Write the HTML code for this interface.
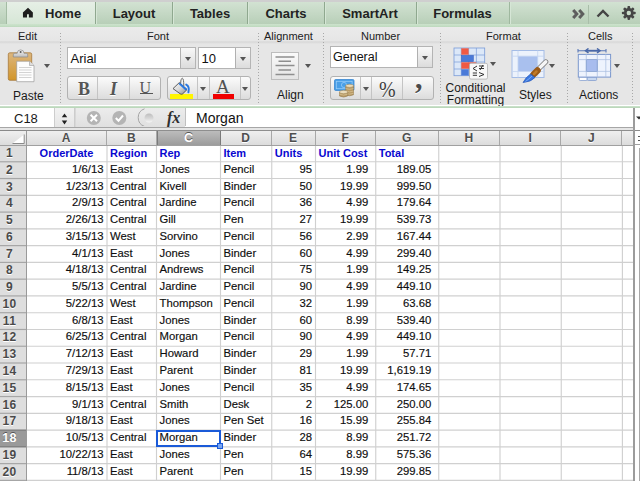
<!DOCTYPE html>
<html><head><meta charset="utf-8">
<style>
html,body{margin:0;padding:0;}
body{width:640px;height:481px;overflow:hidden;position:relative;background:#fff;font-family:"Liberation Sans",sans-serif;color:#1a1a1a;}
.abs{position:absolute;}
/* tab bar */
#topstrip{left:0;top:0;width:640px;height:2px;background:#cfcfcf;}
#tabbar{left:0;top:2px;width:640px;height:22px;background:linear-gradient(#d2e2d2,#b8cfb8);}
.tab{position:absolute;top:2px;height:22px;line-height:24px;font-weight:bold;font-size:13px;color:#222;text-align:center;box-sizing:border-box;}
.tdiv{position:absolute;top:2px;width:1px;height:22px;background:#8fa88f;box-shadow:1px 0 0 #d6e6d6;}
#home{background:linear-gradient(#e6efe6,#d6e6d6);border-left:1px solid #a4bca4;}
#gline1{left:0;top:24px;width:640px;height:3.5px;background:linear-gradient(#cde3cd,#c4dec4 50%,#b2d0b2);}
/* ribbon */
#ribbon{left:0;top:27px;width:640px;height:78px;background:#e6e6e6;}
#ribhead{left:0;top:27px;width:640px;height:17px;background:linear-gradient(#ebebeb 0,#e6e6e6 13.5px,#d8d8d8 15px,#e6e6e6 17px);}
.gl{position:absolute;top:29.5px;font-size:11px;line-height:12px;color:#222;}
.sep{position:absolute;top:33px;width:1px;height:70px;background:repeating-linear-gradient(#a8a8a8 0 1px,transparent 1px 3px);}
.bl{position:absolute;font-size:12px;line-height:13px;color:#1a1a1a;white-space:nowrap;}
.dd{position:absolute;width:0;height:0;border-left:3px solid transparent;border-right:3px solid transparent;border-top:4px solid #555;}
.combo{position:absolute;background:#fff;border:1px solid #b4b4b4;box-sizing:border-box;font-size:13px;color:#111;}
.combo .btn{position:absolute;top:0;bottom:0;right:0;background:linear-gradient(#f8f8f8,#dcdcdc);border-left:1px solid #b0b0b0;}
.bgrp{position:absolute;border:1px solid #b2b2b2;border-radius:3px;background:linear-gradient(#fbfbfb,#dcdcdc);box-sizing:border-box;}
.bdiv{position:absolute;top:0;bottom:0;width:1px;background:#c4c4c4;}
#gline2{left:0;top:106px;width:640px;height:2.3px;background:linear-gradient(#cde3cd,#c4dec4 50%,#b2d0b2);}
/* formula bar */
#fbar{left:0;top:108px;width:640px;height:20px;background:#fff;border-bottom:1px solid #a6a6a6;box-sizing:border-box;}
#gband{left:0;top:128px;width:640px;height:2px;background:#e6e6e6;}
/* grid */
#colhdr{left:0;top:130px;width:640px;height:16px;background:linear-gradient(#efefef,#dcdcdc);border-top:1px solid #8e8e8e;border-bottom:1px solid #a0a0a0;box-sizing:border-box;}
.colh{position:absolute;top:131px;height:14px;line-height:15px;text-align:center;font-weight:bold;font-size:12px;color:#4e4e4e;text-shadow:0 1px 0 #fff;border-right:1px solid #a8a8a8;box-sizing:border-box;}
.colh.sel{background:linear-gradient(#bcbcbc,#9c9c9c);color:#fff;text-shadow:0 -1px 0 #555;font-size:12.5px;border-left:1px solid #7a7a7a;border-right:1px solid #7a7a7a;}
.rowh{position:absolute;left:0;width:26px;line-height:17px;font-weight:bold;font-size:12px;color:#4a4a4a;text-align:center;text-indent:-7px;background:#dedede;box-sizing:border-box;text-shadow:0 1px 0 #fff;letter-spacing:0.3px;}
.rowh.sel{background:#9a9a9a;color:#fff;text-shadow:0 -1px 0 #555;font-size:12.5px;line-height:17.5px;}
#rowhbar{left:26px;top:131px;width:1px;height:350px;background:#9a9a9a;}
.c{position:absolute;height:17px;line-height:15px;font-size:11.3px;color:#0e0e0e;white-space:nowrap;overflow:visible;-webkit-text-stroke:0.15px #0e0e0e;}
.c.h{font-weight:bold;color:#0808d0;-webkit-text-stroke:0;font-size:11px;line-height:16.5px;}
#vsb{left:633px;top:108px;width:7px;height:373px;background:#fff;border-left:2px solid #9c9c9c;box-sizing:border-box;}
</style></head>
<body>
<div id="topstrip" class="abs"></div>
<div id="tabbar" class="abs"></div>
<div id="home" class="tab" style="left:6px;width:89px;"><span style="position:absolute;left:38px;top:0">Home</span>
<svg class="abs" style="left:15px;top:5.2px" width="12" height="11" viewBox="0 0 12 11"><path d="M6 0.7 L0.9 5.4 L1 10.5 L5 10.5 L5 7.3 L6.9 7.3 L6.9 10.5 L10.8 10.5 L10.9 5.4 Z" fill="#1e1e1e"/></svg></div>
<div class="tab" style="left:96px;width:76px;">Layout</div>
<div class="tab" style="left:173px;width:74px;">Tables</div>
<div class="tab" style="left:248px;width:76px;">Charts</div>
<div class="tab" style="left:325px;width:90px;">SmartArt</div>
<div class="tab" style="left:416px;width:93px;">Formulas</div>
<div class="tdiv" style="left:95px"></div><div class="tdiv" style="left:172px"></div><div class="tdiv" style="left:247px"></div><div class="tdiv" style="left:324px"></div><div class="tdiv" style="left:415.5px"></div><div class="tdiv" style="left:509px;background:#9fb89f"></div>
<div class="abs" style="left:588px;top:5px;width:1px;height:19px;background:#a9bea9"></div>
<svg class="abs" style="left:571px;top:8.5px" width="16" height="10" viewBox="0 0 16 10"><path d="M2.2 1 L5.8 5 L2.2 9 M8.2 1 L11.8 5 L8.2 9" stroke="#5e5e5e" stroke-width="3" fill="none"/></svg>
<svg class="abs" style="left:596px;top:9px" width="14" height="9" viewBox="0 0 14 9"><path d="M1.5 7.5 L7 2 L12.5 7.5" stroke="#444" stroke-width="2.4" fill="none"/></svg>
<svg class="abs" style="left:621px;top:5px" width="16" height="16" viewBox="0 0 16 16"><g fill="#454545" transform="translate(7.8 8)"><circle r="4.9"/><rect x="-1.35" y="-6.9" width="2.7" height="13.8" rx="0.8"/><rect x="-1.35" y="-6.9" width="2.7" height="13.8" rx="0.8" transform="rotate(45)"/><rect x="-1.35" y="-6.9" width="2.7" height="13.8" rx="0.8" transform="rotate(90)"/><rect x="-1.35" y="-6.9" width="2.7" height="13.8" rx="0.8" transform="rotate(135)"/><circle r="2.2" fill="#c9dcc9"/></g></svg>
<div id="gline1" class="abs"></div>
<div id="ribbon" class="abs"></div>
<div id="ribhead" class="abs"></div>
<!-- group labels -->
<div class="gl" style="left:18px">Edit</div>
<div class="gl" style="left:147px">Font</div>
<div class="gl" style="left:264px">Alignment</div>
<div class="gl" style="left:361px">Number</div>
<div class="gl" style="left:486px">Format</div>
<div class="gl" style="left:588px">Cells</div>
<div class="sep" style="left:60px"></div>
<div class="sep" style="left:258px"></div>
<div class="sep" style="left:323px"></div>
<div class="sep" style="left:440px"></div>
<div class="sep" style="left:567px"></div>
<div class="sep" style="left:632px"></div>
<!-- Edit: paste -->
<svg class="abs" style="left:7px;top:48px" width="29" height="35" viewBox="0 0 29 35">
<defs><linearGradient id="brd" x1="0" y1="0" x2="0" y2="1"><stop offset="0" stop-color="#dcb67e"/><stop offset="1" stop-color="#d2962a"/></linearGradient>
<linearGradient id="clp" x1="0" y1="0" x2="0" y2="1"><stop offset="0" stop-color="#f4f4f4"/><stop offset="1" stop-color="#bdbdbd"/></linearGradient></defs>
<rect x="1.3" y="4.8" width="23.4" height="27.5" rx="1.5" fill="url(#brd)" stroke="#a77a3c" stroke-width="0.8"/>
<path d="M6.3 9 L6.3 6.8 Q6.3 5.3 7.8 5.3 L10.2 5.3 A3.4 3.4 0 0 1 17 5.3 L19.2 5.3 Q20.7 5.3 20.7 6.8 L20.7 9 Z" fill="url(#clp)" stroke="#8a8a8a" stroke-width="0.7"/>
<circle cx="13.6" cy="3.9" r="1" fill="#5a5a5a"/>
<path d="M9.7 13.2 L22.5 13.2 L27 17.5 L27 33.7 L9.7 33.7 Z" fill="#fdfdfd" stroke="#9a9a9a" stroke-width="0.7"/>
<path d="M22.5 13.2 L22.5 17.5 L27 17.5" fill="#ddd" stroke="#9a9a9a" stroke-width="0.6"/>
<path d="M12 19.5 H24.5 M12 22 H24.5 M12 24.5 H24.5 M12 27 H24.5 M12 29.5 H24.5" stroke="#c8c8c8" stroke-width="0.8"/>
</svg>
<div class="dd" style="left:44px;top:64px"></div>
<div class="bl" style="left:13px;top:89.5px">Paste</div>
<!-- Font group -->
<div class="combo" style="left:67px;top:47px;width:129px;height:22px"><span style="position:absolute;left:2.5px;top:2.5px;line-height:15px">Arial</span><div class="btn" style="width:14px"></div></div>
<div class="dd" style="left:185px;top:57px"></div>
<div class="combo" style="left:198px;top:47px;width:53px;height:22px"><span style="position:absolute;left:2.5px;top:2.5px;line-height:15px">10</span><div class="btn" style="width:14px"></div></div>
<div class="dd" style="left:240px;top:57px"></div>
<div class="bgrp" style="left:67px;top:76px;width:94px;height:24px">
<div class="bdiv" style="left:29px"></div><div class="bdiv" style="left:60.5px"></div>
<span class="abs" style="left:10px;top:2px;font-family:'Liberation Serif',serif;font-weight:bold;font-size:18px;color:#555;text-shadow:0 1px 0 #fff">B</span>
<span class="abs" style="left:42px;top:2px;font-family:'Liberation Serif',serif;font-style:italic;font-weight:bold;font-size:18px;color:#555;text-shadow:0 1px 0 #fff">I</span>
<span class="abs" style="left:71.5px;top:1.5px;font-family:'Liberation Serif',serif;font-size:16px;line-height:18px;color:#555;text-shadow:0 1px 0 #fff">U</span><div class="abs" style="left:72px;top:16px;width:12.5px;height:1.3px;background:#555"></div>
</div>
<div class="bgrp" style="left:167px;top:76px;width:84px;height:24px">
<div class="bdiv" style="left:28.5px"></div><div class="bdiv" style="left:40.5px"></div><div class="bdiv" style="left:71.5px"></div>
<div class="abs" style="left:2px;top:17px;width:22.5px;height:5px;background:#fff500"></div>
<div class="abs" style="left:44.5px;top:17px;width:21.5px;height:5px;background:#f00000"></div>
<span class="abs" style="left:48px;top:-1px;font-family:'Liberation Serif',serif;font-size:19px;color:#505050;">A</span>
<svg class="abs" style="left:0px;top:-1px" width="24" height="20" viewBox="0 0 24 20">
<defs><linearGradient id="silv" x1="0" y1="0" x2="1" y2="1"><stop offset="0" stop-color="#fafafa"/><stop offset="0.5" stop-color="#d8d8d8"/><stop offset="1" stop-color="#8a8a8a"/></linearGradient></defs>
<path d="M5 12.6 L11.3 6.6 L19 13.6 L14.6 17.9 Q13.5 18.6 12.3 17.9 Z" fill="url(#silv)" stroke="#3a3a3a" stroke-width="0.8"/>
<path d="M11.3 7.2 L18.4 13.8" stroke="#2a78e0" stroke-width="2.2"/>
<path d="M12.6 7.6 Q12.6 2 14.3 2.2 Q15.8 2.5 15.8 10" stroke="#6a6a6a" stroke-width="1" fill="none"/>
<path d="M18.2 8.6 Q21.8 10.2 20.4 16.2" stroke="#2a78e0" stroke-width="2" fill="none" stroke-linecap="round"/>
</svg>
</div>
<div class="dd" style="left:200px;top:87px"></div>
<div class="dd" style="left:242px;top:87px"></div>
<!-- Alignment -->
<div class="abs" style="left:271px;top:52px;width:28px;height:28px;box-sizing:border-box;border:1px solid #bdbdbd;background:linear-gradient(#fafafa,#e4e4e4);"></div>
<svg class="abs" style="left:271px;top:52px" width="28" height="28"><path d="M4.5 5 H23.5 M7.5 9.3 H20 M4.5 13.5 H23.5 M7.5 18 H20 M4.5 22.5 H23.5" stroke="#8e8e8e" stroke-width="1.5"/></svg>
<div class="dd" style="left:305px;top:64px"></div>
<div class="bl" style="left:277px;top:89px">Align</div>
<!-- Number -->
<div class="combo" style="left:330px;top:46px;width:103px;height:22px"><span style="position:absolute;left:2px;top:3px;line-height:15px;font-size:12.5px">General</span><div class="btn" style="width:14px"></div></div>
<div class="dd" style="left:422px;top:56px"></div>
<div class="bgrp" style="left:330px;top:76px;width:104px;height:24px">
<div class="bdiv" style="left:29.2px"></div><div class="bdiv" style="left:40.2px"></div><div class="bdiv" style="left:71.2px"></div>
<span class="abs" style="left:48px;top:0.5px;font-family:'Liberation Serif',serif;font-size:20px;line-height:20px;color:#3e3e3e;text-shadow:0 1px 0 #fff;transform:scaleY(1.13);transform-origin:0 0">%</span>
<span class="abs" style="left:84px;top:-14px;font-family:'Liberation Serif',serif;font-weight:bold;font-size:30px;line-height:30px;color:#4a4a4a;text-shadow:0 1px 0 #fff">,</span>
<svg class="abs" style="left:3px;top:2px" width="22" height="20" viewBox="0 0 22 20">
<rect x="0.5" y="0.5" width="19.5" height="11" rx="1.2" fill="#4a9fe6" stroke="#3a86d0" stroke-width="0.8"/>
<rect x="2.3" y="2.3" width="15.8" height="7.4" fill="none" stroke="#9cd0fa" stroke-width="0.7"/>
<circle cx="10" cy="6" r="2.6" fill="none" stroke="#9cd0fa" stroke-width="0.7"/>
<path d="M11.7 6.8 V15.8 Q15.6 17.8 19.5 15.8 V6.8 Z" fill="#b89a66" stroke="#8c7040" stroke-width="0.5"/>
<path d="M11.7 9.5 Q15.6 11.3 19.5 9.5 M11.7 12 Q15.6 13.8 19.5 12 M11.7 14.3 Q15.6 16 19.5 14.3" stroke="#e0cca0" stroke-width="0.6" fill="none"/>
<ellipse cx="15.6" cy="6.8" rx="3.9" ry="1.6" fill="#eadcbc" stroke="#9c8050" stroke-width="0.5"/>
<path d="M5.5 13 V17 Q9.6 19.2 13.7 17 V13 Z" fill="#b89a66" stroke="#8c7040" stroke-width="0.5"/>
<path d="M5.5 15.2 Q9.6 17 13.7 15.2" stroke="#e0cca0" stroke-width="0.6" fill="none"/>
<ellipse cx="9.6" cy="13" rx="4.1" ry="1.7" fill="#eadcbc" stroke="#9c8050" stroke-width="0.5"/>
</svg>
</div>
<div class="dd" style="left:363px;top:87px"></div>
<!-- Format -->
<svg class="abs" style="left:453px;top:47px" width="36" height="34" viewBox="0 0 36 34">
<rect x="1" y="1" width="30.7" height="27.7" fill="#dce8f8" stroke="#7a9cd8" stroke-width="0.8"/>
<path d="M8.3 1 V28.7 M15.6 1 V28.7 M23.4 1 V28.7 M1 8 H31.7 M1 15 H31.7 M1 22 H31.7" stroke="#7a9cd8" stroke-width="0.7"/>
<rect x="8.3" y="1.3" width="7.3" height="6.4" fill="#f05a44"/>
<rect x="8.3" y="8.3" width="12.2" height="6.4" fill="#4a7ad8" stroke="#3a62c0" stroke-width="0.5"/>
<rect x="8.3" y="15.3" width="15" height="6.4" fill="#f05a44"/>
<rect x="8.3" y="22.3" width="7.3" height="6.2" fill="#4a7ad8"/>
<rect x="16.5" y="16.3" width="18" height="15.8" rx="1.5" fill="#f8f8f8" stroke="#b0b0b0" stroke-width="0.8"/>
<path d="M24 19 L20 21.5 L24 24 M19.8 26 H24 M19.8 28.3 H24 M26 19 H31 M26 21.5 H31 M30 18 L27 23 M26 25.5 L31 27.5 L26 29.5" stroke="#333" stroke-width="1" fill="none"/>
</svg>
<div class="dd" style="left:490px;top:62px"></div>
<div class="bl" style="left:445px;top:82px;line-height:12px;text-align:center;width:61px">Conditional<br>Formatting</div>
<svg class="abs" style="left:511px;top:49px" width="38" height="35" viewBox="0 0 38 35">
<rect x="1" y="1.5" width="32" height="27" fill="#ecf2fc" stroke="#a4bce6" stroke-width="1"/>
<rect x="7" y="7.2" width="19.7" height="15.3" fill="#a9c0ee"/>
<path d="M7 1.5 V28.5 M26.7 1.5 V28.5 M1 7.2 H33 M1 22.5 H33" stroke="#c4d4f0" stroke-width="0.8"/>
<path d="M34.8 12.8 L27.5 20" stroke="#7a7a7a" stroke-width="5" stroke-linecap="round"/>
<path d="M34.8 12.8 L27.5 20" stroke="#f6f6f6" stroke-width="3.4" stroke-linecap="round"/>
<path d="M26.5 21.5 L22.5 25.5" stroke="#9a5a18" stroke-width="6.5" stroke-linecap="round"/>
<path d="M25.5 22.5 L23 25" stroke="#c07a28" stroke-width="2.5" stroke-linecap="round"/>
<path d="M19.5 25 Q22 26.5 24 28.5 Q20 33 12 33.5 Q15 28 19.5 25 Z" fill="#3a78e0" stroke="#2858b8" stroke-width="0.7"/>
<path d="M21 27 Q18 30 14.5 32.5" stroke="#8cb8f8" stroke-width="0.8" fill="none"/>
</svg>
<div class="dd" style="left:549px;top:64px"></div>
<div class="bl" style="left:519px;top:89px">Styles</div>
<!-- Cells -->
<svg class="abs" style="left:577px;top:48px" width="36" height="34" viewBox="0 0 36 34">
<path d="M1 1 V4.5 M29 1 V4.5 M1 2.7 H29" stroke="#5a78b8" stroke-width="1.1" fill="none"/>
<path d="M9.5 2.7 H22" stroke="#4a68a8" stroke-width="1.8"/>
<path d="M11.5 0.5 L8.5 2.7 L11.5 4.9 M20 0.5 L23 2.7 L20 4.9" stroke="#4a68a8" stroke-width="1.5" fill="none"/>
<rect x="2.2" y="29" width="8" height="3.5" rx="1" fill="#fff" stroke="#7a96cc" stroke-width="0.7"/>
<rect x="10.2" y="29" width="9.4" height="3.5" rx="1" fill="#c8d8f0" stroke="#7a96cc" stroke-width="0.7"/>
<rect x="1.3" y="6.4" width="32.3" height="22.7" fill="#eef3fd" stroke="#7a96cc" stroke-width="1"/>
<rect x="9.3" y="11.6" width="11" height="11.8" fill="#a8bcee" stroke="#6080c0" stroke-width="0.8"/>
<path d="M9.3 6 V29.3 M20.3 6 V29.3 M28.8 6 V29.3 M1 11.6 H34 M1 23.4 H34" stroke="#a8bce0" stroke-width="0.7"/>
</svg>
<div class="dd" style="left:614px;top:64px"></div>
<div class="bl" style="left:579px;top:89px">Actions</div>
<div id="gline2" class="abs"></div>
<!-- formula bar -->
<div id="fbar" class="abs"></div>
<div class="abs" style="left:0;top:108px;width:54px;height:18px;background:#fff;font-size:13px;line-height:18px;"><span style="position:absolute;left:14px;top:2px">C18</span></div>
<div class="abs" style="left:54px;top:108px;width:21px;height:19px;background:linear-gradient(#f2f2f2,#e6e6e6);border-left:1px solid #cdcdcd;border-right:1px solid #cdcdcd;box-sizing:border-box"></div>
<svg class="abs" style="left:61px;top:113px" width="7" height="12"><path d="M3.5 0.6 L6.2 4.2 H0.8 Z M3.5 11.4 L6.2 7.6 H0.8 Z" fill="#222"/></svg>
<div class="abs" style="left:75px;top:108px;width:110px;height:19px;background:linear-gradient(#ececec,#e0e0e0);border-left:1px solid #d8d8d8;box-sizing:border-box"></div>
<svg class="abs" style="left:77px;top:108px" width="108" height="18">
<circle cx="16.8" cy="10" r="7" fill="#b4b4b4"/><path d="M13.6 6.8 L20 13.2 M20 6.8 L13.6 13.2" stroke="#fff" stroke-width="2"/>
<circle cx="42.3" cy="10" r="7" fill="#b4b4b4"/><path d="M38.8 10 L41.5 12.8 L46 7.5" stroke="#fff" stroke-width="2" fill="none"/>
<defs><linearGradient id="sph" x1="0" y1="0" x2="0" y2="1"><stop offset="0" stop-color="#bdbdbd"/><stop offset="0.55" stop-color="#d8d8d8"/><stop offset="1" stop-color="#f6f6f6"/></linearGradient></defs>
<path d="M67.5 0.8 A9.3 9.3 0 0 0 67.5 18.4" stroke="#a4a4a4" stroke-width="1" fill="none"/>
<circle cx="72" cy="10" r="4.5" fill="url(#sph)"/>
</svg>
<span class="abs" style="left:167px;top:108px;font-family:'Liberation Serif',serif;font-style:italic;font-weight:bold;font-size:16px;line-height:20px;color:#2e2e2e">fx</span>
<div class="abs" style="left:185px;top:108px;width:448px;height:18px;background:#fff;border-left:1px solid #c0c0c0"></div>
<span class="abs" style="left:196px;top:109px;font-size:14px;line-height:19px;color:#111">Morgan</span>
<div id="gband" class="abs"></div>
<!-- grid -->
<svg class="abs" style="left:0;top:0" width="640" height="481"><line x1="26" y1="145.00" x2="633" y2="145.00" stroke="#d0d0d0" stroke-width="1.15"/><line x1="26" y1="161.77" x2="633" y2="161.77" stroke="#d0d0d0" stroke-width="1.15"/><line x1="26" y1="178.54" x2="633" y2="178.54" stroke="#d0d0d0" stroke-width="1.15"/><line x1="26" y1="195.31" x2="633" y2="195.31" stroke="#d0d0d0" stroke-width="1.15"/><line x1="26" y1="212.08" x2="633" y2="212.08" stroke="#d0d0d0" stroke-width="1.15"/><line x1="26" y1="228.85" x2="633" y2="228.85" stroke="#d0d0d0" stroke-width="1.15"/><line x1="26" y1="245.62" x2="633" y2="245.62" stroke="#d0d0d0" stroke-width="1.15"/><line x1="26" y1="262.39" x2="633" y2="262.39" stroke="#d0d0d0" stroke-width="1.15"/><line x1="26" y1="279.16" x2="633" y2="279.16" stroke="#d0d0d0" stroke-width="1.15"/><line x1="26" y1="295.93" x2="633" y2="295.93" stroke="#d0d0d0" stroke-width="1.15"/><line x1="26" y1="312.70" x2="633" y2="312.70" stroke="#d0d0d0" stroke-width="1.15"/><line x1="26" y1="329.47" x2="633" y2="329.47" stroke="#d0d0d0" stroke-width="1.15"/><line x1="26" y1="346.24" x2="633" y2="346.24" stroke="#d0d0d0" stroke-width="1.15"/><line x1="26" y1="363.01" x2="633" y2="363.01" stroke="#d0d0d0" stroke-width="1.15"/><line x1="26" y1="379.78" x2="633" y2="379.78" stroke="#d0d0d0" stroke-width="1.15"/><line x1="26" y1="396.55" x2="633" y2="396.55" stroke="#d0d0d0" stroke-width="1.15"/><line x1="26" y1="413.32" x2="633" y2="413.32" stroke="#d0d0d0" stroke-width="1.15"/><line x1="26" y1="430.09" x2="633" y2="430.09" stroke="#d0d0d0" stroke-width="1.15"/><line x1="26" y1="446.86" x2="633" y2="446.86" stroke="#d0d0d0" stroke-width="1.15"/><line x1="26" y1="463.63" x2="633" y2="463.63" stroke="#d0d0d0" stroke-width="1.15"/><line x1="26" y1="480.40" x2="633" y2="480.40" stroke="#d0d0d0" stroke-width="1.15"/><line x1="107" y1="145" x2="107" y2="481" stroke="#d0d0d0" stroke-width="1.15"/><line x1="156.5" y1="145" x2="156.5" y2="481" stroke="#d0d0d0" stroke-width="1.15"/><line x1="220.5" y1="145" x2="220.5" y2="481" stroke="#d0d0d0" stroke-width="1.15"/><line x1="271.75" y1="145" x2="271.75" y2="481" stroke="#d0d0d0" stroke-width="1.15"/><line x1="315.5" y1="145" x2="315.5" y2="481" stroke="#d0d0d0" stroke-width="1.15"/><line x1="375.75" y1="145" x2="375.75" y2="481" stroke="#d0d0d0" stroke-width="1.15"/><line x1="438.75" y1="145" x2="438.75" y2="481" stroke="#d0d0d0" stroke-width="1.15"/><line x1="500" y1="145" x2="500" y2="481" stroke="#d0d0d0" stroke-width="1.15"/><line x1="561.25" y1="145" x2="561.25" y2="481" stroke="#d0d0d0" stroke-width="1.15"/><line x1="622.4" y1="145" x2="622.4" y2="481" stroke="#d0d0d0" stroke-width="1.15"/></svg><div class="c h" style="left:29.00px;width:75.00px;top:145.00px;text-align:center">OrderDate</div><div class="c h" style="left:110.00px;width:43.50px;top:145.00px;text-align:left">Region</div><div class="c h" style="left:159.50px;width:58.00px;top:145.00px;text-align:left">Rep</div><div class="c h" style="left:223.50px;width:45.25px;top:145.00px;text-align:left">Item</div><div class="c h" style="left:274.75px;width:37.75px;top:145.00px;text-align:left">Units</div><div class="c h" style="left:318.50px;width:54.25px;top:145.00px;text-align:left">Unit Cost</div><div class="c h" style="left:378.75px;width:57.00px;top:145.00px;text-align:left">Total</div><div class="c" style="left:29.00px;width:74.50px;top:161.77px;text-align:right">1/6/13</div><div class="c" style="left:110.00px;width:43.00px;top:161.77px;text-align:left">East</div><div class="c" style="left:159.50px;width:57.50px;top:161.77px;text-align:left">Jones</div><div class="c" style="left:223.50px;width:44.75px;top:161.77px;text-align:left">Pencil</div><div class="c" style="left:274.75px;width:37.25px;top:161.77px;text-align:right">95</div><div class="c" style="left:318.50px;width:49.75px;top:161.77px;text-align:right">1.99</div><div class="c" style="left:378.75px;width:52.50px;top:161.77px;text-align:right">189.05</div><div class="c" style="left:29.00px;width:74.50px;top:178.54px;text-align:right">1/23/13</div><div class="c" style="left:110.00px;width:43.00px;top:178.54px;text-align:left">Central</div><div class="c" style="left:159.50px;width:57.50px;top:178.54px;text-align:left">Kivell</div><div class="c" style="left:223.50px;width:44.75px;top:178.54px;text-align:left">Binder</div><div class="c" style="left:274.75px;width:37.25px;top:178.54px;text-align:right">50</div><div class="c" style="left:318.50px;width:49.75px;top:178.54px;text-align:right">19.99</div><div class="c" style="left:378.75px;width:52.50px;top:178.54px;text-align:right">999.50</div><div class="c" style="left:29.00px;width:74.50px;top:195.31px;text-align:right">2/9/13</div><div class="c" style="left:110.00px;width:43.00px;top:195.31px;text-align:left">Central</div><div class="c" style="left:159.50px;width:57.50px;top:195.31px;text-align:left">Jardine</div><div class="c" style="left:223.50px;width:44.75px;top:195.31px;text-align:left">Pencil</div><div class="c" style="left:274.75px;width:37.25px;top:195.31px;text-align:right">36</div><div class="c" style="left:318.50px;width:49.75px;top:195.31px;text-align:right">4.99</div><div class="c" style="left:378.75px;width:52.50px;top:195.31px;text-align:right">179.64</div><div class="c" style="left:29.00px;width:74.50px;top:212.08px;text-align:right">2/26/13</div><div class="c" style="left:110.00px;width:43.00px;top:212.08px;text-align:left">Central</div><div class="c" style="left:159.50px;width:57.50px;top:212.08px;text-align:left">Gill</div><div class="c" style="left:223.50px;width:44.75px;top:212.08px;text-align:left">Pen</div><div class="c" style="left:274.75px;width:37.25px;top:212.08px;text-align:right">27</div><div class="c" style="left:318.50px;width:49.75px;top:212.08px;text-align:right">19.99</div><div class="c" style="left:378.75px;width:52.50px;top:212.08px;text-align:right">539.73</div><div class="c" style="left:29.00px;width:74.50px;top:228.85px;text-align:right">3/15/13</div><div class="c" style="left:110.00px;width:43.00px;top:228.85px;text-align:left">West</div><div class="c" style="left:159.50px;width:57.50px;top:228.85px;text-align:left">Sorvino</div><div class="c" style="left:223.50px;width:44.75px;top:228.85px;text-align:left">Pencil</div><div class="c" style="left:274.75px;width:37.25px;top:228.85px;text-align:right">56</div><div class="c" style="left:318.50px;width:49.75px;top:228.85px;text-align:right">2.99</div><div class="c" style="left:378.75px;width:52.50px;top:228.85px;text-align:right">167.44</div><div class="c" style="left:29.00px;width:74.50px;top:245.62px;text-align:right">4/1/13</div><div class="c" style="left:110.00px;width:43.00px;top:245.62px;text-align:left">East</div><div class="c" style="left:159.50px;width:57.50px;top:245.62px;text-align:left">Jones</div><div class="c" style="left:223.50px;width:44.75px;top:245.62px;text-align:left">Binder</div><div class="c" style="left:274.75px;width:37.25px;top:245.62px;text-align:right">60</div><div class="c" style="left:318.50px;width:49.75px;top:245.62px;text-align:right">4.99</div><div class="c" style="left:378.75px;width:52.50px;top:245.62px;text-align:right">299.40</div><div class="c" style="left:29.00px;width:74.50px;top:262.39px;text-align:right">4/18/13</div><div class="c" style="left:110.00px;width:43.00px;top:262.39px;text-align:left">Central</div><div class="c" style="left:159.50px;width:57.50px;top:262.39px;text-align:left">Andrews</div><div class="c" style="left:223.50px;width:44.75px;top:262.39px;text-align:left">Pencil</div><div class="c" style="left:274.75px;width:37.25px;top:262.39px;text-align:right">75</div><div class="c" style="left:318.50px;width:49.75px;top:262.39px;text-align:right">1.99</div><div class="c" style="left:378.75px;width:52.50px;top:262.39px;text-align:right">149.25</div><div class="c" style="left:29.00px;width:74.50px;top:279.16px;text-align:right">5/5/13</div><div class="c" style="left:110.00px;width:43.00px;top:279.16px;text-align:left">Central</div><div class="c" style="left:159.50px;width:57.50px;top:279.16px;text-align:left">Jardine</div><div class="c" style="left:223.50px;width:44.75px;top:279.16px;text-align:left">Pencil</div><div class="c" style="left:274.75px;width:37.25px;top:279.16px;text-align:right">90</div><div class="c" style="left:318.50px;width:49.75px;top:279.16px;text-align:right">4.99</div><div class="c" style="left:378.75px;width:52.50px;top:279.16px;text-align:right">449.10</div><div class="c" style="left:29.00px;width:74.50px;top:295.93px;text-align:right">5/22/13</div><div class="c" style="left:110.00px;width:43.00px;top:295.93px;text-align:left">West</div><div class="c" style="left:159.50px;width:57.50px;top:295.93px;text-align:left">Thompson</div><div class="c" style="left:223.50px;width:44.75px;top:295.93px;text-align:left">Pencil</div><div class="c" style="left:274.75px;width:37.25px;top:295.93px;text-align:right">32</div><div class="c" style="left:318.50px;width:49.75px;top:295.93px;text-align:right">1.99</div><div class="c" style="left:378.75px;width:52.50px;top:295.93px;text-align:right">63.68</div><div class="c" style="left:29.00px;width:74.50px;top:312.70px;text-align:right">6/8/13</div><div class="c" style="left:110.00px;width:43.00px;top:312.70px;text-align:left">East</div><div class="c" style="left:159.50px;width:57.50px;top:312.70px;text-align:left">Jones</div><div class="c" style="left:223.50px;width:44.75px;top:312.70px;text-align:left">Binder</div><div class="c" style="left:274.75px;width:37.25px;top:312.70px;text-align:right">60</div><div class="c" style="left:318.50px;width:49.75px;top:312.70px;text-align:right">8.99</div><div class="c" style="left:378.75px;width:52.50px;top:312.70px;text-align:right">539.40</div><div class="c" style="left:29.00px;width:74.50px;top:329.47px;text-align:right">6/25/13</div><div class="c" style="left:110.00px;width:43.00px;top:329.47px;text-align:left">Central</div><div class="c" style="left:159.50px;width:57.50px;top:329.47px;text-align:left">Morgan</div><div class="c" style="left:223.50px;width:44.75px;top:329.47px;text-align:left">Pencil</div><div class="c" style="left:274.75px;width:37.25px;top:329.47px;text-align:right">90</div><div class="c" style="left:318.50px;width:49.75px;top:329.47px;text-align:right">4.99</div><div class="c" style="left:378.75px;width:52.50px;top:329.47px;text-align:right">449.10</div><div class="c" style="left:29.00px;width:74.50px;top:346.24px;text-align:right">7/12/13</div><div class="c" style="left:110.00px;width:43.00px;top:346.24px;text-align:left">East</div><div class="c" style="left:159.50px;width:57.50px;top:346.24px;text-align:left">Howard</div><div class="c" style="left:223.50px;width:44.75px;top:346.24px;text-align:left">Binder</div><div class="c" style="left:274.75px;width:37.25px;top:346.24px;text-align:right">29</div><div class="c" style="left:318.50px;width:49.75px;top:346.24px;text-align:right">1.99</div><div class="c" style="left:378.75px;width:52.50px;top:346.24px;text-align:right">57.71</div><div class="c" style="left:29.00px;width:74.50px;top:363.01px;text-align:right">7/29/13</div><div class="c" style="left:110.00px;width:43.00px;top:363.01px;text-align:left">East</div><div class="c" style="left:159.50px;width:57.50px;top:363.01px;text-align:left">Parent</div><div class="c" style="left:223.50px;width:44.75px;top:363.01px;text-align:left">Binder</div><div class="c" style="left:274.75px;width:37.25px;top:363.01px;text-align:right">81</div><div class="c" style="left:318.50px;width:49.75px;top:363.01px;text-align:right">19.99</div><div class="c" style="left:378.75px;width:52.50px;top:363.01px;text-align:right">1,619.19</div><div class="c" style="left:29.00px;width:74.50px;top:379.78px;text-align:right">8/15/13</div><div class="c" style="left:110.00px;width:43.00px;top:379.78px;text-align:left">East</div><div class="c" style="left:159.50px;width:57.50px;top:379.78px;text-align:left">Jones</div><div class="c" style="left:223.50px;width:44.75px;top:379.78px;text-align:left">Pencil</div><div class="c" style="left:274.75px;width:37.25px;top:379.78px;text-align:right">35</div><div class="c" style="left:318.50px;width:49.75px;top:379.78px;text-align:right">4.99</div><div class="c" style="left:378.75px;width:52.50px;top:379.78px;text-align:right">174.65</div><div class="c" style="left:29.00px;width:74.50px;top:396.55px;text-align:right">9/1/13</div><div class="c" style="left:110.00px;width:43.00px;top:396.55px;text-align:left">Central</div><div class="c" style="left:159.50px;width:57.50px;top:396.55px;text-align:left">Smith</div><div class="c" style="left:223.50px;width:44.75px;top:396.55px;text-align:left">Desk</div><div class="c" style="left:274.75px;width:37.25px;top:396.55px;text-align:right">2</div><div class="c" style="left:318.50px;width:49.75px;top:396.55px;text-align:right">125.00</div><div class="c" style="left:378.75px;width:52.50px;top:396.55px;text-align:right">250.00</div><div class="c" style="left:29.00px;width:74.50px;top:413.32px;text-align:right">9/18/13</div><div class="c" style="left:110.00px;width:43.00px;top:413.32px;text-align:left">East</div><div class="c" style="left:159.50px;width:57.50px;top:413.32px;text-align:left">Jones</div><div class="c" style="left:223.50px;width:44.75px;top:413.32px;text-align:left">Pen Set</div><div class="c" style="left:274.75px;width:37.25px;top:413.32px;text-align:right">16</div><div class="c" style="left:318.50px;width:49.75px;top:413.32px;text-align:right">15.99</div><div class="c" style="left:378.75px;width:52.50px;top:413.32px;text-align:right">255.84</div><div class="c" style="left:29.00px;width:74.50px;top:430.09px;text-align:right">10/5/13</div><div class="c" style="left:110.00px;width:43.00px;top:430.09px;text-align:left">Central</div><div class="c" style="left:159.50px;width:57.50px;top:430.09px;text-align:left">Morgan</div><div class="c" style="left:223.50px;width:44.75px;top:430.09px;text-align:left">Binder</div><div class="c" style="left:274.75px;width:37.25px;top:430.09px;text-align:right">28</div><div class="c" style="left:318.50px;width:49.75px;top:430.09px;text-align:right">8.99</div><div class="c" style="left:378.75px;width:52.50px;top:430.09px;text-align:right">251.72</div><div class="c" style="left:29.00px;width:74.50px;top:446.86px;text-align:right">10/22/13</div><div class="c" style="left:110.00px;width:43.00px;top:446.86px;text-align:left">East</div><div class="c" style="left:159.50px;width:57.50px;top:446.86px;text-align:left">Jones</div><div class="c" style="left:223.50px;width:44.75px;top:446.86px;text-align:left">Pen</div><div class="c" style="left:274.75px;width:37.25px;top:446.86px;text-align:right">64</div><div class="c" style="left:318.50px;width:49.75px;top:446.86px;text-align:right">8.99</div><div class="c" style="left:378.75px;width:52.50px;top:446.86px;text-align:right">575.36</div><div class="c" style="left:29.00px;width:74.50px;top:463.63px;text-align:right">11/8/13</div><div class="c" style="left:110.00px;width:43.00px;top:463.63px;text-align:left">East</div><div class="c" style="left:159.50px;width:57.50px;top:463.63px;text-align:left">Parent</div><div class="c" style="left:223.50px;width:44.75px;top:463.63px;text-align:left">Pen</div><div class="c" style="left:274.75px;width:37.25px;top:463.63px;text-align:right">15</div><div class="c" style="left:318.50px;width:49.75px;top:463.63px;text-align:right">19.99</div><div class="c" style="left:378.75px;width:52.50px;top:463.63px;text-align:right">299.85</div>
<div id="colhdr" class="abs"></div>
<div class="colh" style="left:26.00px;width:81.00px">A</div><div class="colh" style="left:107.00px;width:49.50px">B</div><div class="colh sel" style="left:156.50px;width:64.00px">C</div><div class="colh" style="left:220.50px;width:51.25px">D</div><div class="colh" style="left:271.75px;width:43.75px">E</div><div class="colh" style="left:315.50px;width:60.25px">F</div><div class="colh" style="left:375.75px;width:63.00px">G</div><div class="colh" style="left:438.75px;width:61.25px">H</div><div class="colh" style="left:500.00px;width:61.25px">I</div><div class="colh" style="left:561.25px;width:61.15px">J</div>
<div class="rowh" style="top:145.00px;height:16.77px">1</div><div class="rowh" style="top:161.77px;height:16.77px">2</div><div class="rowh" style="top:178.54px;height:16.77px">3</div><div class="rowh" style="top:195.31px;height:16.77px">4</div><div class="rowh" style="top:212.08px;height:16.77px">5</div><div class="rowh" style="top:228.85px;height:16.77px">6</div><div class="rowh" style="top:245.62px;height:16.77px">7</div><div class="rowh" style="top:262.39px;height:16.77px">8</div><div class="rowh" style="top:279.16px;height:16.77px">9</div><div class="rowh" style="top:295.93px;height:16.77px">10</div><div class="rowh" style="top:312.70px;height:16.77px">11</div><div class="rowh" style="top:329.47px;height:16.77px">12</div><div class="rowh" style="top:346.24px;height:16.77px">13</div><div class="rowh" style="top:363.01px;height:16.77px">14</div><div class="rowh" style="top:379.78px;height:16.77px">15</div><div class="rowh" style="top:396.55px;height:16.77px">16</div><div class="rowh" style="top:413.32px;height:16.77px">17</div><div class="rowh sel" style="top:430.09px;height:16.77px">18</div><div class="rowh" style="top:446.86px;height:16.77px">19</div><div class="rowh" style="top:463.63px;height:16.77px">20</div><svg class="abs" style="left:0;top:0" width="27" height="481"><line x1="0" y1="161.77" x2="26" y2="161.77" stroke="#a6a6a6" stroke-width="1.2"/><line x1="0" y1="178.54" x2="26" y2="178.54" stroke="#a6a6a6" stroke-width="1.2"/><line x1="0" y1="195.31" x2="26" y2="195.31" stroke="#a6a6a6" stroke-width="1.2"/><line x1="0" y1="212.08" x2="26" y2="212.08" stroke="#a6a6a6" stroke-width="1.2"/><line x1="0" y1="228.85" x2="26" y2="228.85" stroke="#a6a6a6" stroke-width="1.2"/><line x1="0" y1="245.62" x2="26" y2="245.62" stroke="#a6a6a6" stroke-width="1.2"/><line x1="0" y1="262.39" x2="26" y2="262.39" stroke="#a6a6a6" stroke-width="1.2"/><line x1="0" y1="279.16" x2="26" y2="279.16" stroke="#a6a6a6" stroke-width="1.2"/><line x1="0" y1="295.93" x2="26" y2="295.93" stroke="#a6a6a6" stroke-width="1.2"/><line x1="0" y1="312.70" x2="26" y2="312.70" stroke="#a6a6a6" stroke-width="1.2"/><line x1="0" y1="329.47" x2="26" y2="329.47" stroke="#a6a6a6" stroke-width="1.2"/><line x1="0" y1="346.24" x2="26" y2="346.24" stroke="#a6a6a6" stroke-width="1.2"/><line x1="0" y1="363.01" x2="26" y2="363.01" stroke="#a6a6a6" stroke-width="1.2"/><line x1="0" y1="379.78" x2="26" y2="379.78" stroke="#a6a6a6" stroke-width="1.2"/><line x1="0" y1="396.55" x2="26" y2="396.55" stroke="#a6a6a6" stroke-width="1.2"/><line x1="0" y1="413.32" x2="26" y2="413.32" stroke="#a6a6a6" stroke-width="1.2"/><line x1="0" y1="430.09" x2="26" y2="430.09" stroke="#7a7a7a" stroke-width="1.2"/><line x1="0" y1="446.86" x2="26" y2="446.86" stroke="#7a7a7a" stroke-width="1.2"/><line x1="0" y1="463.63" x2="26" y2="463.63" stroke="#a6a6a6" stroke-width="1.2"/><line x1="0" y1="480.40" x2="26" y2="480.40" stroke="#a6a6a6" stroke-width="1.2"/></svg>
<div id="rowhbar" class="abs"></div>
<div class="abs" style="left:0;top:130px;width:26px;height:16px;background:linear-gradient(#efefef,#dcdcdc);border-top:1px solid #8a8a8a;border-bottom:1px solid #a0a0a0;box-sizing:border-box"></div>
<svg class="abs" style="left:11px;top:134px" width="15" height="11"><path d="M13.2 0.5 V9.5 H1.5 Z" fill="#fff"/><path d="M13.2 0.5 V9.5 H1.5" fill="none" stroke="#8a8a8a" stroke-width="1"/></svg>
<!-- selection -->
<div class="abs" style="left:156px;top:430px;width:65px;height:17px;border:2px solid #1a5ad8;box-sizing:border-box"></div>
<div class="abs" style="left:217px;top:443px;width:6px;height:6px;background:#7aa6f0;border:1px solid #1a5ad8;box-sizing:border-box"></div>
<div id="vsb" class="abs"></div>
<div class="abs" style="left:635px;top:130px;width:5px;height:1px;background:#8a8a8a"></div>
<div class="abs" style="left:635px;top:144px;width:5px;height:1px;background:#a0a0a0"></div>
<div class="abs" style="left:638px;top:136px;width:2px;height:1px;background:#555"></div>
<div class="abs" style="left:638px;top:140px;width:2px;height:1px;background:#555"></div>
<div class="abs" style="left:639px;top:148px;width:1px;height:333px;background:#a8a8a8"></div>
<svg class="abs" style="left:636px;top:116px" width="4" height="4"><path d="M0 0.5 H6 L3 3.5Z" fill="#333"/></svg>
</body></html>
